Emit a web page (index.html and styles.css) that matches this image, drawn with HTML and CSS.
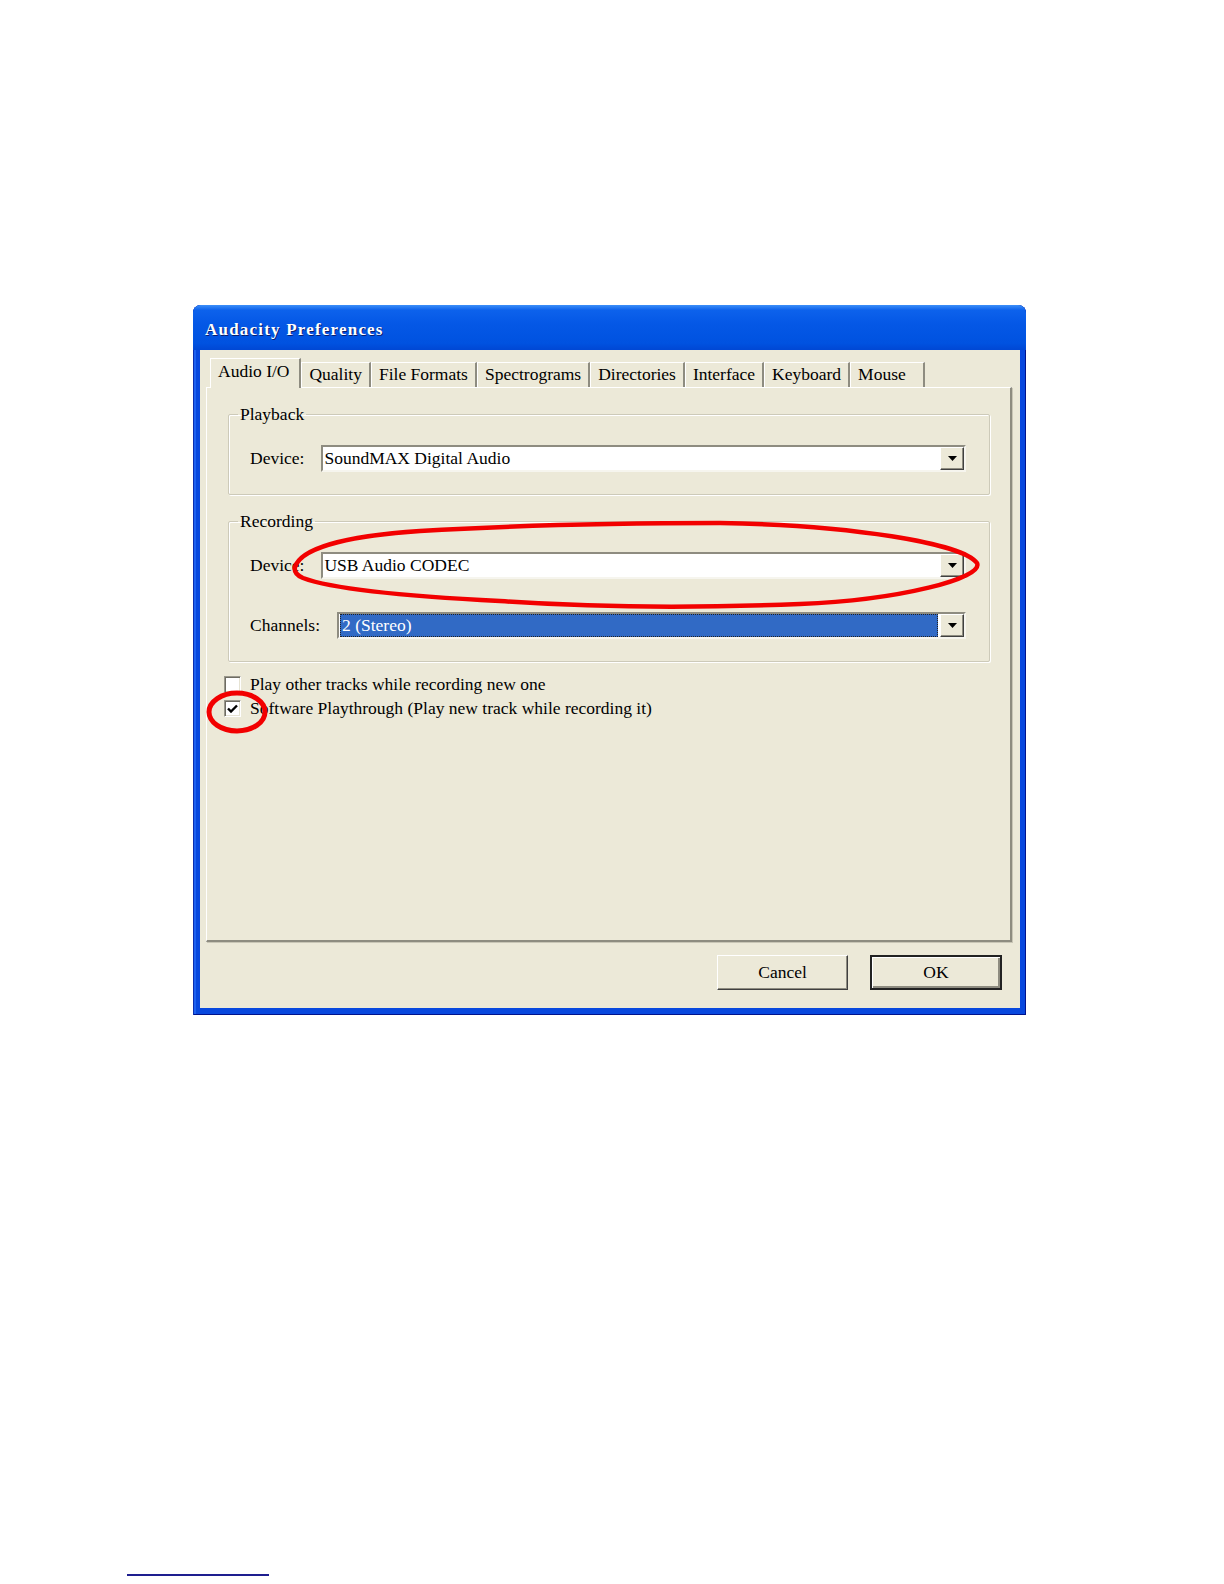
FILE: index.html
```html
<!DOCTYPE html>
<html lang="en">
<head>
    <meta charset="UTF-8">
    <title>Audacity Preferences</title>
    <link rel="stylesheet" href="styles.css">
</head>
<body>
    <div class="page">
        <div class="window">
            <div class="titlebar">Audacity Preferences</div>
            <div class="client">
                <div class="tabs">
                    <div class="tab active">Audio I/O</div>
                    <div class="tab">Quality</div>
                    <div class="tab">File Formats</div>
                    <div class="tab">Spectrograms</div>
                    <div class="tab">Directories</div>
                    <div class="tab">Interface</div>
                    <div class="tab">Keyboard</div>
                    <div class="tab last">Mouse</div>
                </div>

                <div class="panel">
                    <fieldset class="group playback">
                        <legend>Playback</legend>
                        <div class="row">
                            <span class="label">Device:</span>
                            <div class="combo">
                                <span class="value">SoundMAX Digital Audio</span>
                                <span class="drop"><svg width="9" height="5" viewBox="0 0 9 5"><path d="M0 0h9L4.5 5z" fill="#000"/></svg></span>
                            </div>
                        </div>
                    </fieldset>

                    <fieldset class="group recording">
                        <legend>Recording</legend>
                        <div class="row">
                            <span class="label">Device:</span>
                            <div class="combo">
                                <span class="value">USB Audio CODEC</span>
                                <span class="drop"><svg width="9" height="5" viewBox="0 0 9 5"><path d="M0 0h9L4.5 5z" fill="#000"/></svg></span>
                            </div>
                        </div>
                        <div class="row">
                            <span class="label">Channels:</span>
                            <div class="combo">
                                <span class="value selected">2 (Stereo)</span>
                                <span class="drop"><svg width="9" height="5" viewBox="0 0 9 5"><path d="M0 0h9L4.5 5z" fill="#000"/></svg></span>
                            </div>
                        </div>
                    </fieldset>

                    <div class="checks">
                        <div class="check-row">
                            <span class="box"></span>
                            <span>Play other tracks while recording new one</span>
                        </div>
                        <div class="check-row">
                            <span class="box"><svg width="11" height="9" viewBox="0 0 11 9"><path d="M1 4.5l3 3L10 1.5" fill="none" stroke="#000" stroke-width="2.4"/></svg></span>
                            <span>Software Playthrough (Play new track while recording it)</span>
                        </div>
                    </div>
                </div>

                <div class="buttons">
                    <button class="btn">Cancel</button>
                    <button class="btn default">OK</button>
                </div>
            </div>
        </div>

        <div class="footnote-rule"></div>

        <!-- red marker annotations drawn over the screenshot -->
        <svg class="marks" width="1224" height="1584" viewBox="0 0 1224 1584">
            <path d="M295 567 C302 545 360 535 420 531 C520 525 620 523 720 523 C850 525 962 543 977 563 C984 578 900 600 800 604 C700 608 600 608 500 601 C420 597 335 590 303 578 C296 575 294 571 295 567 Z"
                  fill="none" stroke="#f20000" stroke-width="4.5"/>
            <ellipse cx="237" cy="712" rx="28" ry="19" fill="none" stroke="#f20000" stroke-width="5"/>
        </svg>
    </div>
</body>
</html>
```

FILE: styles.css
```css
body {
    margin: 0;
    background-color: #fff;
    font-family: "Liberation Serif", "Times New Roman", serif;
    font-size: 17.5px;
    color: #000;
}
.page {
    position: relative;
    width: 1224px;
    height: 1584px;
    padding-top: 305px;
    box-sizing: border-box;
    overflow: hidden;
}
.window {
    width: 833px;
    margin-left: 193px;
    padding: 0 6px 7px 7px;
    box-sizing: border-box;
    border-radius: 8px 8px 0 0;
    background-color: #0848de;
    box-shadow: inset 1px 0 #0a2fb0, inset -1px 0 #00138c, inset 0 -1px #00138c, inset 3px 0 #1e62f0;
}
.titlebar {
    height: 45px;
    margin: 0 -6px 0 -7px;
    padding: 4px 0 0 12px;
    box-sizing: border-box;
    display: flex;
    align-items: center;
    border-radius: 8px 8px 0 0;
    background: linear-gradient(#3d8ff8 0, #0d62ec 5px, #0558e6 40%, #0052e0 85%, #0047d4 100%);
    color: #fff;
    font-weight: bold;
    font-size: 17px;
    letter-spacing: 1.2px;
    text-shadow: 1px 1px 0 #0a1e6e;
}
.client {
    height: 658px;
    padding: 8px 8px 0 6px;
    box-sizing: border-box;
    background-color: #ece9d8;
}
.tabs {
    display: flex;
    align-items: flex-end;
    height: 29px;
    padding-left: 4px;
}
.tab {
    height: 25px;
    padding: 2px 7px 0;
    box-sizing: border-box;
    line-height: 18px;
    border-left: 1px solid #fff;
    border-top: 1px solid #fff;
    border-right: 2px solid #8e8c80;
    white-space: nowrap;
}
.tab.active {
    position: relative;
    height: 30px;
    margin-bottom: -1px;
    padding: 3px 10px 0 7px;
    background-color: #ece9d8;
}
.tab.last {
    padding-right: 17px;
}
.panel {
    height: 555px;
    padding: 16px 20px 0 21px;
    box-sizing: border-box;
    border-top: 1px solid #fff;
    border-left: 1px solid #fff;
    border-right: 2px solid #8e8c80;
    border-bottom: 2px solid #8e8c80;
    box-shadow: 1px 1px 0 #c9c6b6;
}
.group {
    margin: 0 0 16px;
    padding: 21px 23px 22px 0;
    border: 1px solid #cdcab9;
    border-radius: 2px;
    box-shadow: 1px 1px 0 #fff, inset 1px 1px 0 #fff;
}
.group.recording {
    margin-bottom: 10px;
}
.group legend {
    margin-left: 9px;
    padding: 0 2px;
    line-height: 20px;
}
.row {
    display: flex;
    align-items: center;
    gap: 17px;
    margin-left: 21px;
}
.row + .row {
    margin-top: 33px;
}
.combo {
    flex: 1;
    display: flex;
    height: 27px;
    box-sizing: border-box;
    border: 2px solid;
    border-color: #8e8c80 #f6f5ee #f6f5ee #8e8c80;
    background-color: #fff;
}
.value {
    flex: 1;
    padding-left: 1px;
    line-height: 23px;
    white-space: nowrap;
}
.value.selected {
    margin: 0 2px 0 1px;
    padding-left: 2px;
    background-color: #316ac5;
    color: #fff;
    outline: 1px dotted #222;
    outline-offset: -1px;
}
.drop {
    width: 24px;
    height: 23px;
    box-sizing: border-box;
    display: flex;
    align-items: center;
    justify-content: center;
    border: 1px solid;
    border-color: #fff #404040 #404040 #fff;
    box-shadow: inset -1px -1px 0 #8e8c80;
    background-color: #ece9d8;
}
.checks {
    margin-left: -4px;
}
.check-row {
    display: flex;
    align-items: center;
    gap: 9px;
    height: 24px;
    white-space: nowrap;
}
.box {
    width: 17px;
    height: 17px;
    box-sizing: border-box;
    display: flex;
    align-items: center;
    justify-content: center;
    border: 1px solid;
    border-color: #9a988c #fff #fff #9a988c;
    box-shadow: inset 1px 1px 0 #6e6c62, inset -1px -1px 0 #e6e3d3;
    background-color: #fff;
}
.buttons {
    display: flex;
    justify-content: flex-end;
    gap: 22px;
    padding: 13px 10px 0 0;
}
.btn {
    width: 131px;
    height: 35px;
    font: inherit;
    color: #000;
    border: 1px solid;
    border-color: #fff #404040 #404040 #fff;
    box-shadow: inset -1px -1px 0 #8e8c80;
    background-color: #ece9d8;
    padding: 0;
}
.btn.default {
    width: 132px;
    border: 2px solid #222;
    box-shadow: inset 1px 1px 0 #fff, inset -2px -2px 0 #8e8c80;
}
.footnote-rule {
    width: 142px;
    height: 2px;
    margin: 559px 0 0 127px;
    background-color: #1e1e8f;
}
.marks {
    position: absolute;
    top: 0;
    left: 0;
    pointer-events: none;
}
```
